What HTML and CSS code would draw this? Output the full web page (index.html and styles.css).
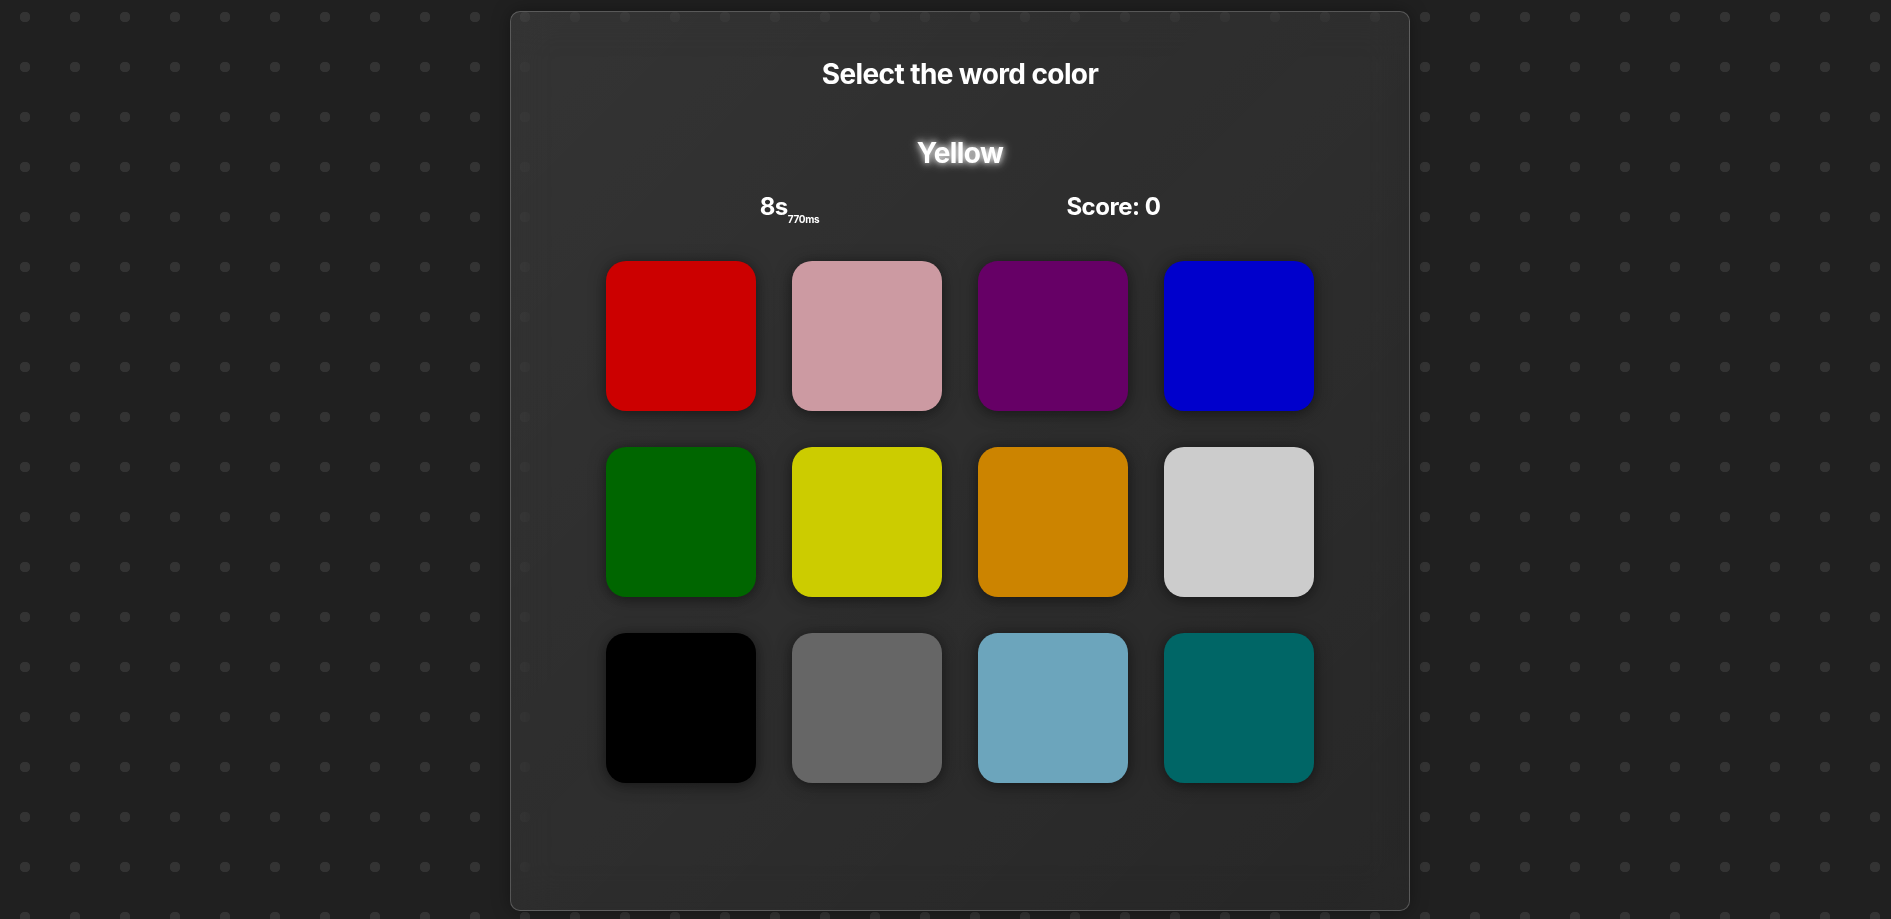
FILE: index.html
```html
<!DOCTYPE html>
<html lang="en">
<head>
<meta charset="utf-8">
<title>Select the word color</title>
<link rel="stylesheet" href="styles.css">
</head>
<body>
<main class="card">
  <h1 class="title">Select the word color</h1>
  <div class="word">Yellow</div>
  <div class="stats">
    <div class="timer">8s<span class="ms">770ms</span></div>
    <div class="score">Score: 0</div>
  </div>
  <div class="grid">
    <button class="swatch red" aria-label="red"></button>
    <button class="swatch pink" aria-label="pink"></button>
    <button class="swatch purple" aria-label="purple"></button>
    <button class="swatch blue" aria-label="blue"></button>
    <button class="swatch green" aria-label="green"></button>
    <button class="swatch yellow" aria-label="yellow"></button>
    <button class="swatch orange" aria-label="orange"></button>
    <button class="swatch white" aria-label="white"></button>
    <button class="swatch black" aria-label="black"></button>
    <button class="swatch gray" aria-label="gray"></button>
    <button class="swatch skyblue" aria-label="skyblue"></button>
    <button class="swatch teal" aria-label="teal"></button>
  </div>
</main>
</body>
</html>
```
FILE: styles.css
```css
html, body {
  margin: 0;
  padding: 0;
}
body {
  height: 919px;
  overflow: hidden;
  background-color: #202020;
  background-image: radial-gradient(circle at 25px 25px, #333333 0, #333333 5px, transparent 5.5px);
  background-size: 50px 50px;
  background-position: 0 -8px;
  font-family: Inter, "Noto Sans", sans-serif;
  color: #ffffff;
  padding-top: 11px;
  box-sizing: border-box;
}
.card {
  box-sizing: border-box;
  width: 900px;
  height: 900px;
  margin-left: 510px;
  border: 1px solid rgba(255, 255, 255, 0.22);
  border-radius: 10px;
  background: linear-gradient(135deg, rgba(255, 255, 255, 0.085), rgba(255, 255, 255, 0.03));
  backdrop-filter: blur(20px);
  box-shadow: 0 0 18px rgba(0, 0, 0, 0.35);
  display: flex;
  flex-direction: column;
  align-items: center;
  padding-top: 45px;
}
.title {
  margin: 0;
  font-size: 28px;
  line-height: 34px;
  font-weight: 700;
  letter-spacing: -0.6px;
}
.word {
  margin-top: 45px;
  font-size: 28px;
  line-height: 34px;
  font-weight: 700;
  letter-spacing: -0.6px;
  text-shadow: 0 0 6px rgba(255, 255, 255, 0.9), 0 0 12px rgba(255, 255, 255, 0.6);
}
.stats {
  margin-top: 22px;
  display: flex;
  gap: 247px;
  font-size: 24px;
  line-height: 30px;
  font-weight: 700;
  letter-spacing: -0.5px;
}
.ms {
  font-size: 10px;
  letter-spacing: -0.3px;
  vertical-align: -8px;
  line-height: 10px;
}
.grid {
  margin-top: 37px;
  display: grid;
  grid-template-columns: repeat(4, 150px);
  grid-auto-rows: 150px;
  gap: 36px;
}
.swatch {
  border: none;
  padding: 0;
  border-radius: 20px;
  box-shadow: 0 2px 16px rgba(0, 0, 0, 0.55);
  cursor: pointer;
}
.red { background: #cc0000; }
.pink { background: #cc9aa2; }
.purple { background: #660066; }
.blue { background: #0000cc; }
.green { background: #006600; }
.yellow { background: #cccc00; }
.orange { background: #cc8400; }
.white { background: #cccccc; }
.black { background: #000000; }
.gray { background: #666666; }
.skyblue { background: #6ca5bc; }
.teal { background: #006666; }
```
